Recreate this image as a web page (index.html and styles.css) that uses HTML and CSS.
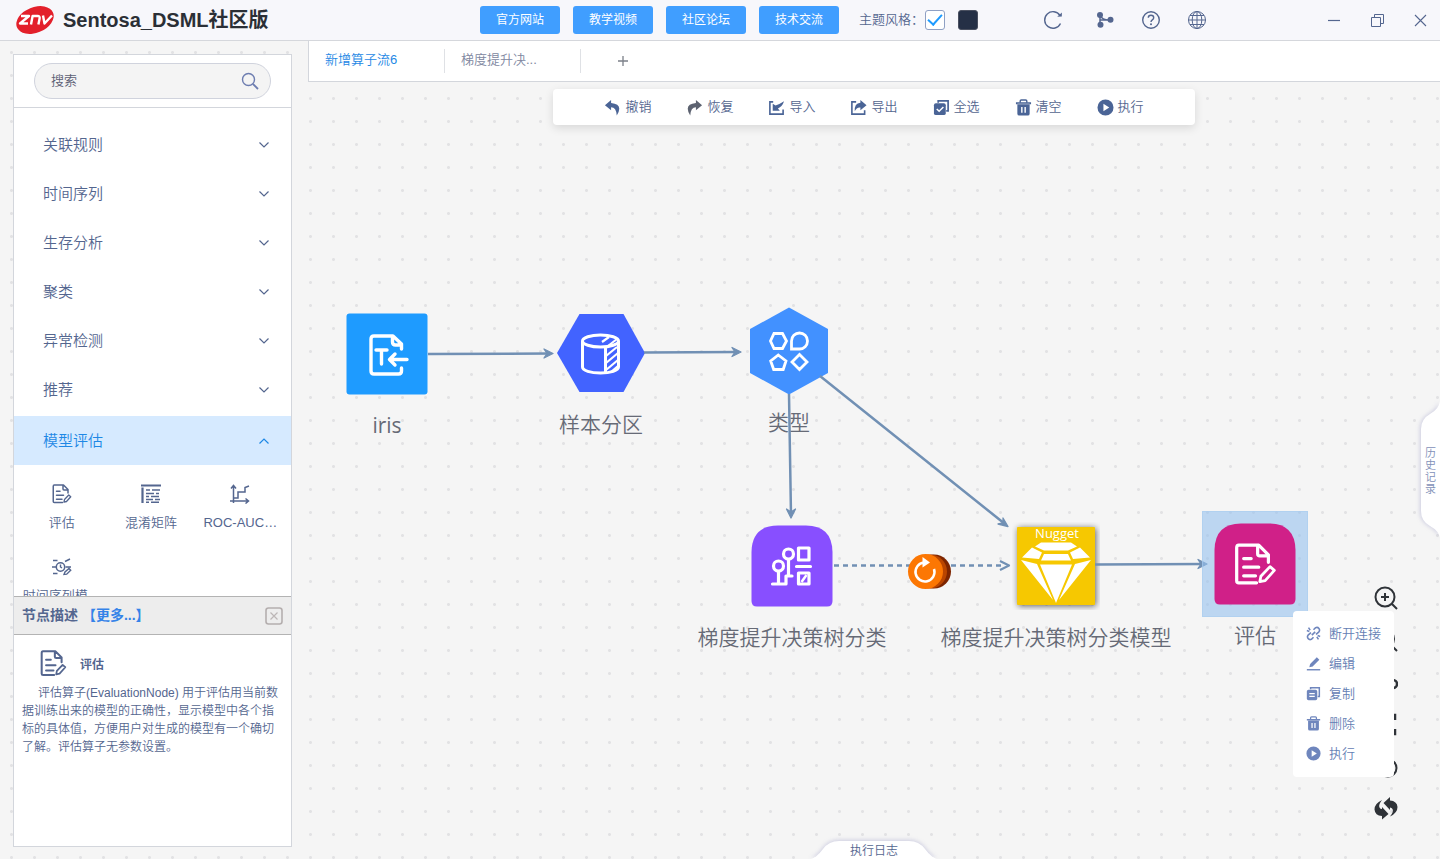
FILE: index.html
```html
<!DOCTYPE html>
<html lang="zh-CN">
<head>
<meta charset="utf-8">
<title>Sentosa_DSML社区版</title>
<link rel="stylesheet" href="styles.css">
</head>
<body>
<svg class="defs" width="0" height="0" aria-hidden="true">
  <symbol id="chevron" viewBox="0 0 12 12"><path d="M1.500 3.500L6 8l4.500-4.500" fill="none" stroke="currentColor" stroke-width="1.200"/></symbol>
  <symbol id="doc-edit" viewBox="0 0 40 40"><path d="M21 37H4.500Q2.500 37 2.500 35V4.500Q2.500 2 4.500 2H23l9 9v7M22 2.500V10q0 2 2 2h8M9 14.500h7M9 22.500h14M9 30.500h11" fill="none" stroke="currentColor" stroke-width="3" stroke-linecap="round" stroke-linejoin="round"/><path d="M24 36l1-5 8.500-9 4 3.500-8.500 9.500z" fill="none" stroke="currentColor" stroke-width="2.600" stroke-linejoin="round"/></symbol>
  <symbol id="trash" viewBox="0 0 18 18"><path d="M5.500 4V2.200Q5.500 1 6.700 1h4.600q1.200 0 1.200 1.200V4" fill="none" stroke="currentColor" stroke-width="1.500"/><path fill-rule="evenodd" d="M1 3.500h16v2H1zM2.500 5h13v10.500q0 2-2 2h-9q-2 0-2-2zM6.500 8.500v6h1.500v-6zM10 8.500v6h1.500v-6z" fill="currentColor"/></symbol>
  <symbol id="run" viewBox="0 0 18 18"><path fill-rule="evenodd" d="M9 .5a8.500 8.500 0 1 0 0 17a8.500 8.500 0 0 0 0-17zM6.800 5v8l6.200-4z" fill="currentColor"/></symbol>
</svg>

<header class="topbar">
  <div class="brand">
    <svg class="logo" viewBox="0 0 40 30" aria-label="znv"><ellipse cx="20" cy="15" rx="19.500" ry="12.800" transform="rotate(-22 20 15)" fill="#e3202b"/><g fill="none" stroke="#fff" stroke-width="2.400" stroke-linejoin="round"><path d="M6 11h8L5 18.500h8"/><path d="M16 19.500l1.600-8.500h5q2.500 0 2 2.500l-1.200 6"/><path d="M28 10.500l1.500 8L37 10.500"/></g></svg>
    <h1 class="title">Sentosa_DSML社区版</h1>
  </div>
  <nav class="links">
    <a class="link" href="#">官方网站</a>
    <a class="link" href="#">教学视频</a>
    <a class="link" href="#">社区论坛</a>
    <a class="link" href="#">技术交流</a>
  </nav>
  <div class="theme">
    <label for="theme-light">主题风格：</label>
    <input class="swatch" type="checkbox" id="theme-light" checked>
    <input class="swatch swatch-dark" type="checkbox" aria-label="深色主题">
  </div>
  <div class="tools">
    <button class="tool tool-refresh" aria-label="刷新"><svg viewBox="0 0 20 20"><path d="M17.500 13.500A8.300 8.300 0 1 1 17 5.500" fill="none" stroke="currentColor" stroke-width="1.400"/><path d="M14.200 6.800l4.600-.2.100-4.200z" fill="currentColor"/></svg></button>
    <button class="tool" aria-label="流程"><svg viewBox="0 0 20 20"><path d="M5 5v10M5 10h10M5 5q2 5 9 5" fill="none" stroke="currentColor" stroke-width="1.500"/><circle cx="5" cy="5" r="3" fill="currentColor"/><circle cx="5.500" cy="14.800" r="3" fill="currentColor"/><circle cx="15.500" cy="9.800" r="3" fill="currentColor"/></svg></button>
    <button class="tool" aria-label="帮助"><svg viewBox="0 0 20 20"><circle cx="10" cy="10" r="8.300" fill="none" stroke="currentColor" stroke-width="1.400"/><path d="M7.300 7.800Q7.300 5.300 10 5.300t2.700 2.400Q12.700 9 11.300 9.900 10 10.700 10 12" fill="none" stroke="currentColor" stroke-width="1.400"/><circle cx="10" cy="14.300" r="1" fill="currentColor"/></svg></button>
    <button class="tool" aria-label="语言"><svg viewBox="0 0 20 20"><g fill="none" stroke="currentColor" stroke-width="1"><circle cx="10" cy="10" r="8.500"/><ellipse cx="10" cy="10" rx="4.800" ry="8.500"/><path d="M10 1.500v17M1.500 10h17M3 5.500h14M3 14.500h14"/></g></svg></button>
  </div>
  <div class="window">
    <button class="tool" aria-label="最小化"><svg viewBox="0 0 20 20"><path d="M4 10.500h12" stroke="currentColor" stroke-width="1.200"/></svg></button>
    <button class="tool" aria-label="还原"><svg viewBox="0 0 20 20"><path d="M4.500 7.500h9v9h-9zM7.500 7V4.500h9v9H14" fill="none" stroke="currentColor" stroke-width="1"/></svg></button>
    <button class="tool" aria-label="关闭"><svg viewBox="0 0 20 20"><path d="M5 5l11 11M16 5L5 16" stroke="currentColor" stroke-width="1.100"/></svg></button>
  </div>
</header>

<div class="workspace">
  <aside class="sidebar">
    <div class="search">
      <div class="search-box">
        <input class="search-input" type="text" placeholder="搜索" aria-label="搜索">
        <svg class="search-icon" viewBox="0 0 18 18"><circle cx="7.500" cy="7.500" r="6" fill="none" stroke="currentColor" stroke-width="1.400"/><path d="M12 12l5 5" stroke="currentColor" stroke-width="1.800"/></svg>
      </div>
    </div>
    <div class="groups">
      <button class="group"><span>关联规则</span><svg class="chevron"><use href="#chevron"/></svg></button>
      <button class="group"><span>时间序列</span><svg class="chevron"><use href="#chevron"/></svg></button>
      <button class="group"><span>生存分析</span><svg class="chevron"><use href="#chevron"/></svg></button>
      <button class="group"><span>聚类</span><svg class="chevron"><use href="#chevron"/></svg></button>
      <button class="group"><span>异常检测</span><svg class="chevron"><use href="#chevron"/></svg></button>
      <button class="group"><span>推荐</span><svg class="chevron"><use href="#chevron"/></svg></button>
      <button class="group group-open"><span>模型评估</span><svg class="chevron"><use href="#chevron"/></svg></button>
      <div class="operators">
        <button class="operator"><svg><use href="#doc-edit"/></svg><span>评估</span></button>
        <button class="operator"><svg viewBox="0 0 20 20"><path d="M0 1.500h20M1.500 3.500V19" stroke="currentColor" stroke-width="2.200"/><path d="M5 6h4m2 0h8M5 9.500h8m2 0h3M5 12.500h3m2 0h8M5 15.500h7m2 0h5M5 18.300h3m2 0h8" stroke="currentColor" stroke-width="1.500"/></svg><span>混淆矩阵</span></button>
        <button class="operator"><svg viewBox="0 0 20 20"><path d="M3.500 19V2M0 17h18M1 4.500L3.500 1.500 6 4.500M15.500 14.500L18.500 17l-3 2.500M4 14h4V8h7V3.500l4-1.500" fill="none" stroke="currentColor" stroke-width="1.500"/></svg><span>ROC-AUC…</span></button>
        <button class="operator"><svg viewBox="0 0 20 20"><circle cx="8.500" cy="10" r="4.200" fill="none" stroke="currentColor" stroke-width="1.500"/><path d="M8.500 7.500V10l1.500 1M1 3.500h4.500M0 10h4M1 16.500h4.500M13 4.500l5-2.500M13.500 10H19M12 17.500l1-2.500 4-3.500 1.700 1.700-4 4z" fill="none" stroke="currentColor" stroke-width="1.400"/></svg><span>时间序列模…</span></button>
      </div>
    </div>
    <section class="details">
      <div class="details-head">
        <h2 class="details-title">节点描述 <a class="more" href="#">【更多...】</a></h2>
        <button class="details-close" aria-label="关闭描述"><svg viewBox="0 0 18 18"><rect x="1" y="1" width="16" height="16" rx="2.500" fill="none" stroke="#b4aeae" stroke-width="1.600"/><path d="M5.500 5.500l7 7M12.500 5.500l-7 7" stroke="#bcb6b6" stroke-width="1.200"/></svg></button>
      </div>
      <div class="details-body">
        <h3 class="details-name"><svg><use href="#doc-edit"/></svg>评估</h3>
        <p class="details-text">评估算子(EvaluationNode) 用于评估用当前数据训练出来的模型的正确性，显示模型中各个指标的具体值，方便用户对生成的模型有一个确切了解。评估算子无参数设置。</p>
      </div>
    </section>
  </aside>

  <main class="main">
    <div class="tabs">
      <button class="tab tab-active">新增算子流6</button>
      <button class="tab">梯度提升决...</button>
      <button class="tab-add" aria-label="新建"><svg viewBox="0 0 12 12"><path d="M6 1v10M1 6h10" stroke="currentColor" stroke-width="1.300"/></svg></button>
    </div>

    <div class="canvas">
      <div class="actions">
        <button class="action"><svg viewBox="0 0 18 18"><path d="M7.500 1L1 6.500l6.500 5.500V8.800q5.500 0 6 8.700Q21 5.500 7.500 4.300z" fill="currentColor"/></svg><span>撤销</span></button>
        <button class="action action-muted"><svg viewBox="0 0 18 18"><path d="M10.500 1L17 6.500l-6.500 5.500V8.800q-5.500 0-6 8.700Q-3 5.500 10.500 4.300z" fill="currentColor"/></svg><span>恢复</span></button>
        <button class="action"><svg viewBox="0 0 18 18"><path d="M5.500 3H2v13h14v-5" fill="none" stroke="currentColor" stroke-width="1.700"/><path d="M5 5v7.500h7.500L10.500 10Q15 8.500 17 2.500q-4.500 3-9 4.500z" fill="currentColor"/></svg><span>导入</span></button>
        <button class="action"><svg viewBox="0 0 18 18"><path d="M6.500 3H2v13h13.500v-4" fill="none" stroke="currentColor" stroke-width="1.700"/><path d="M11 1l6.500 5.500L11 12V9Q7 8.500 5 13 4.500 4.500 11 4z" fill="currentColor"/></svg><span>导出</span></button>
        <button class="action"><svg viewBox="0 0 18 18"><path d="M5.500 4V2h10.500v10.500H14" fill="none" stroke="currentColor" stroke-width="1.800"/><rect x="1" y="4.500" width="12.500" height="12.500" rx="2" fill="currentColor"/><path d="M4 10.500l2.500 2.500 4.500-4.500" fill="none" stroke="#fff" stroke-width="1.600"/></svg><span>全选</span></button>
        <button class="action"><svg><use href="#trash"/></svg><span>清空</span></button>
        <button class="action"><svg><use href="#run"/></svg><span>执行</span></button>
      </div>

      <div class="node node-iris">
        <svg viewBox="0 0 88 88"><rect x="3.500" y="3.500" width="81" height="81" rx="3" fill="#1e9bff"/><g fill="none" stroke="#fff" stroke-width="3.400" stroke-linejoin="round" stroke-linecap="round"><path d="M58.500 39V34L50 26H31q-3 0-3 3v32q0 3 3 3h24.500q3 0 3-3v-3M49.500 27v5q0 3 3 3h5"/><path d="M33 40h11M38.500 40v14M64 49.500H47M52 44l-5.500 5.500L52 55"/></g></svg>
        <span>iris</span>
      </div>
      <div class="node node-split">
        <svg viewBox="0 0 88 88"><path d="M22.500 5h44L88 44 66.500 83h-44L0 44z" fill="#4263ff"/><g fill="none" stroke="#fff" stroke-width="3"><ellipse cx="43.500" cy="32" rx="18" ry="6"/><path d="M25.500 32v26c0 3.500 8 6 18 6s18-2.500 18-6V32M48.500 38v25"/><path d="M49 47l11-9M49 54l12-10M49 61l12-10M54 63l7-6M45 33l7-5M51 37l9-7" stroke-width="2.200"/></g></svg>
        <span>样本分区</span>
      </div>
      <div class="node node-type">
        <svg viewBox="0 0 88 88"><path d="M44 .5L83 22v44L44 87.500 5 66V22z" fill="#4291ff"/><g fill="none" stroke="#fff" stroke-width="2.800"><path d="M29 26.500h8.500L41.500 34l-4 7.500H29L25.500 34zM46.500 42v-8a8 8 0 1 1 8 8zM33.300 48L41 54l-2.800 8.500h-9.500L25.700 54zM54.500 47.500l7.500 7.500-7.500 7.500-7.500-7.500z"/></g></svg>
        <span>类型</span>
      </div>
      <div class="node node-train">
        <svg viewBox="0 0 88 88"><path d="M3.500 30Q4 3.500 30 3.500h28Q84 3.500 84.500 30v49q0 5.500-5.500 5.500H9q-5.500 0-5.500-5.500z" fill="#884fff"/><g fill="none" stroke="#fff" stroke-width="3.200"><circle cx="40.500" cy="32" r="5"/><circle cx="30.500" cy="44" r="5"/><path d="M40.500 38v16M30.500 50v11.500M24.500 62H38V54h6M50.500 26h10.500v12H50.500zM48.500 44.500h14M50.500 51h10.500v11H50.500z" stroke-linecap="round" stroke-linejoin="round"/><path d="M53.500 60l5-7" stroke-width="2.500"/></g></svg>
        <span>梯度提升决策树分类</span>
      </div>
      <div class="node node-model">
        <svg viewBox="0 0 88 88"><rect class="nugget" x="5" y="5" width="78" height="78" rx="1"/><text class="nugget-text" x="45" y="16" text-anchor="middle">Nugget</text><path fill="#fff" d="M29 20.500h30l6 4-9 4H32l-9-4zM20 25.500l10 5-3 6.500-17-1.500zM68 25.500l-10 5 3 6.500 17-1.500zM32 32h24l3 6.500H29zM9 38l16 4 16 36zM79 38l-16 4-16 36zM28 42.500h32L44 81z"/></svg>
        <span>梯度提升决策树分类模型</span>
      </div>
      <div class="node node-eval">
        <svg viewBox="0 0 88 88"><path d="M3.500 30Q4 3.500 30 3.500h28Q84 3.500 84.500 30v49q0 5.500-5.500 5.500H9q-5.500 0-5.500-5.500z" fill="#d02088"/><svg x="23" y="23" width="43" height="43" color="#fff"><use href="#doc-edit"/></svg></svg>
        <span>评估</span>
      </div>

      <svg class="edges" aria-hidden="true">
        <g fill="none" stroke="#7190b4" stroke-width="2.500">
          <path d="M120 272L242 271.500M336 270.500L430 270M481 312L483 433M512 294L697 442M787 482.500L897 482"/>
          <path d="M526 483.500H696" stroke-dasharray="5 4"/>
        </g>
        <g fill="#7190b4" stroke="#7190b4" stroke-width="1.300" stroke-linejoin="round">
          <path d="M236 267l9 4.500-9 4.500 3-4.500zM424 265.500l9 4.500-9 4.500 3-4.500zM478.500 427l4.500 9 4.500-9-4.500 3zM695 436l5 8.500-10-2.500 5-1zM890 477.500l9 4.500-9 4.500 3-4.500z"/>
          <path d="M692 479l9 4.500-9 4.500" fill="none" stroke-width="2.200"/>
        </g>
        <g>
          <circle cx="626" cy="489.500" r="17" fill="#7d2500"/>
          <circle cx="622" cy="489.500" r="17" fill="#b94500"/>
          <circle cx="617.500" cy="489.500" r="17.500" fill="#fc7703"/>
          <path d="M626 487a9.500 9.500 0 1 1-10-6.500" fill="none" stroke="#fff" stroke-width="2.500"/>
          <path d="M614.500 475l7.500 5.500-7.500 5z" fill="#fff"/>
        </g>
      </svg>
      <div class="selection"></div>

      <div class="zoom">
        <button class="zoom-btn" aria-label="放大"><svg viewBox="0 0 24 24"><circle cx="11" cy="11" r="9.500"/><path d="M18 18l5 5M11 7v8M7 11h8"/></svg></button>
        <button class="zoom-btn" aria-label="缩小"><svg viewBox="0 0 24 24"><circle cx="10.500" cy="11" r="9.500"/><path d="M18 18l5 5M7 11h8"/></svg></button>
        <button class="zoom-btn" aria-label="定位"><svg viewBox="0 0 24 24"><circle cx="19" cy="14" r="4" stroke-width="2.500"/><path d="M1 14h14"/></svg></button>
        <button class="zoom-btn" aria-label="适应画布"><svg viewBox="0 0 24 24"><path d="M2 8V3h5M17 3h4v5M21 17v5h-4M7 22H2v-5" stroke-width="2.500"/></svg></button>
        <button class="zoom-btn" aria-label="还原"><svg viewBox="0 0 24 24"><circle cx="14" cy="14" r="8.500"/></svg></button>
        <button class="zoom-btn" aria-label="同步"><svg viewBox="0 0 24 24"><path class="solid" d="M9.500 7L16 1v3.500q7 .5 7.500 6.500 0 6-7.500 9.500 4-5 2.500-7.500-.800-1.500-2.500-1.500V14zM14.500 18L8 23.500V20Q1 19.500.5 13.500.5 7.500 8 4 4 9 5.500 11.500q.8 1.500 2.500 1.500v-2z"/></svg></button>
      </div>

      <div class="menu">
        <button class="menu-item"><svg viewBox="0 0 18 18"><path d="M9 4.500l2.500-2.500q2.500-1 4 1t0 4L12 10M9 13.500L6.500 16q-2.500 1-4-1t0-4L6 8M7 11l4-4M3 2l2 3M1 5.500l3 1M15 16l-2-3M17 12.500l-3-1" fill="none" stroke="currentColor" stroke-width="1.900"/></svg><span>断开连接</span></button>
        <button class="menu-item"><svg viewBox="0 0 18 18"><path d="M4 13.500l1-4L13 1.500l3 3-8 8z" fill="currentColor"/><path d="M1 16.500h16" stroke="currentColor" stroke-width="1.700"/></svg><span>编辑</span></button>
        <button class="menu-item"><svg viewBox="0 0 18 18"><path d="M5.500 4V2h10.500v10.500H14" fill="none" stroke="currentColor" stroke-width="1.800"/><rect x="1" y="4.500" width="12.500" height="12.500" rx="2" fill="currentColor"/><path d="M4 9h6.500M4 12.500h6.500" stroke="#fff" stroke-width="1.500"/></svg><span>复制</span></button>
        <button class="menu-item"><svg><use href="#trash"/></svg><span>删除</span></button>
        <button class="menu-item"><svg><use href="#run"/></svg><span>执行</span></button>
      </div>

      <button class="history"><svg viewBox="0 0 20 140" aria-hidden="true"><path d="M20 1Q19 9 10 14 1 19 1 29V111Q1 121 10 126 19 131 20 138z" fill="#fff"/></svg><span>历史记录</span></button>
      <button class="log"><svg viewBox="0 0 126 18" aria-hidden="true"><path d="M0 18Q6 16 12 8 18 0 28 0H98Q108 0 114 8 120 16 126 18z" fill="#fff"/></svg><span>执行日志</span></button>
    </div>
  </main>
</div>
</body>
</html>
```
FILE: styles.css
```css
* { box-sizing: border-box; }

body {
  margin: 0;
  min-height: 100vh;
  display: flex;
  flex-direction: column;
  overflow: hidden;
  font-family: "Liberation Sans", "Noto Sans CJK SC", sans-serif;
  font-size: 13px;
  font-weight: 350;
  color: #54668f;
  background-color: #f5f5f5;
  background-image: radial-gradient(circle, #e2e2e4 1px, transparent 2px);
  background-size: 23px 23px;
  background-position: 0 18px;
}

button {
  margin: 0;
  padding: 0;
  border: 0;
  background: none;
  font: inherit;
  color: inherit;
  cursor: pointer;
}

h1, h2, h3, p { margin: 0; }
a { text-decoration: none; }
svg { display: block; flex: none; }
.defs { position: absolute; }

/* top bar */
.topbar {
  display: flex;
  align-items: center;
  height: 41px;
  padding-right: 10px;
  background: #f7f7fb;
  border-bottom: 1px solid #d5d7dc;
}
.brand {
  display: flex;
  align-items: center;
  gap: 8px;
  width: 479px;
  padding-left: 15px;
}
.logo { width: 40px; height: 30px; }
.title {
  font-size: 20px;
  font-weight: 700;
  line-height: 28px;
  color: #2b2f36;
}
.links { display: flex; gap: 13px; margin-left: 1px; }
.link {
  width: 80px;
  height: 28px;
  line-height: 28px;
  border-radius: 3px;
  background: #409eff;
  color: #fff;
  font-size: 12px;
  font-weight: 400;
  text-align: center;
}
.theme {
  display: flex;
  align-items: center;
  margin-left: 20px;
}
.theme label { width: 66px; padding-bottom: 3px; white-space: nowrap; }
.swatch {
  appearance: none;
  display: grid;
  place-items: center;
  width: 20px;
  height: 20px;
  margin: 0;
  border: 1px solid #8fa0c4;
  border-radius: 3px;
  background: #fff;
}
.swatch:checked::after {
  content: "";
  width: 6px;
  height: 12px;
  margin-bottom: 4px;
  border: solid #1e9bff;
  border-width: 0 2px 2px 0;
  transform: rotate(42deg);
}
.swatch-dark {
  margin-left: 13px;
  border-color: #4a5060;
  background: #253046;
}
.tools { display: flex; gap: 26px; margin-left: 65px; }
.tool-refresh { margin-right: 6px; }
.tool svg { width: 20px; height: 20px; }
.window { display: flex; gap: 23px; margin-left: auto; }

/* layout */
.workspace { flex: 1; display: flex; min-height: 0; }

/* sidebar */
.sidebar {
  display: flex;
  flex-direction: column;
  width: 279px;
  height: calc(100vh - 66px);
  margin: 13px 16px 12px 13px;
  background: #fff;
  border: 1px solid #d3d6dc;
}
.search { padding: 8px 20px; border-bottom: 1px solid #d3d6dc; }
.search-box {
  display: flex;
  align-items: center;
  height: 36px;
  padding: 0 11px 0 16px;
  border: 1px solid #d0d3dd;
  border-radius: 18px;
  background: #f4f4f4;
}
.search-input {
  flex: 1;
  min-width: 0;
  padding: 0 0 2px;
  border: 0;
  outline: 0;
  background: none;
  font: inherit;
}
.search-input::placeholder { color: #5d6075; }
.search-icon { width: 18px; height: 18px; color: #6d7db0; }

.groups { flex: 1; min-height: 0; padding-top: 14px; overflow: hidden; }
.group {
  display: flex;
  align-items: center;
  justify-content: space-between;
  width: 100%;
  height: 49px;
  padding: 0 21px 3px 29px;
  font-size: 15px;
}
.group span { padding-bottom: 3px; }
.chevron { width: 12px; height: 12px; }
.group-open { padding-bottom: 0; background: #d6eaff; color: #1e88e5; }
.group-open .chevron { transform: rotate(180deg); }

.operators {
  display: grid;
  grid-template-columns: repeat(3, 1fr);
  padding: 19px 6px 0 3px;
}
.operator {
  display: flex;
  flex-direction: column;
  align-items: center;
  gap: 9px;
  height: 73px;
  min-width: 0;
}
.operator svg { width: 20px; height: 20px; }
.operator span { white-space: nowrap; line-height: 20px; }

.details { flex: none; height: 250px; border-top: 1px solid #b3b3b3; }
.details-head {
  display: flex;
  align-items: center;
  justify-content: space-between;
  height: 38px;
  padding: 0 8px;
  background: #ededed;
  border-bottom: 1px solid #b3b3b3;
}
.details-title { padding-bottom: 3px; font-size: 14px; font-weight: 700; }
.more { color: #3583e8; }
.details-close svg { width: 18px; height: 18px; }
.details-body { padding: 15px 8px; }
.details-name {
  display: flex;
  align-items: center;
  gap: 13px;
  padding-left: 18px;
  font-size: 12px;
  font-weight: 700;
}
.details-name svg { width: 27px; height: 27px; }
.details-text {
  margin-top: 7px;
  font-size: 12px;
  line-height: 18px;
  text-indent: 16px;
}

/* tabs */
.main { flex: 1; min-width: 0; display: flex; flex-direction: column; }
.tabs {
  display: flex;
  align-items: center;
  height: 41px;
  background: #fff;
  border-left: 1px solid #d3d6dc;
  border-bottom: 1px solid #d3d6dc;
}
.tab {
  width: 136px;
  height: 24px;
  padding: 0 16px 2px;
  border-right: 1px solid #dfe1e5;
  color: #8087a0;
  text-align: left;
  line-height: 20px;
}
.tab-active { color: #1e88e5; }
.tab-add { margin-left: 36px; color: #7c8089; }
.tab-add svg { width: 12px; height: 12px; }

/* canvas */
.canvas { position: relative; flex: 1; overflow: hidden; }
.actions {
  display: flex;
  gap: 35px;
  width: max-content;
  height: 36px;
  margin: 7px auto 0;
  padding: 0 51px;
  background: #fff;
  border-radius: 4px;
  box-shadow: 0 3px 10px rgba(0, 0, 0, 0.12);
}
.action { display: flex; align-items: center; gap: 4px; }
.action span { padding-bottom: 3px; }
.action svg { width: 17px; height: 17px; color: #4a6496; }
.action-muted svg { color: #5c6270; }

.node {
  position: absolute;
  display: flex;
  flex-direction: column;
  align-items: center;
  gap: 12px;
  width: 240px;
  font-family: "Open Sans", "Noto Sans CJK SC", sans-serif;
  font-size: 21px;
  line-height: 30px;
  color: #666a76;
}
.node svg { width: 88px; height: 88px; }
.node svg svg { width: 43px; height: 43px; }
.node-iris { left: -41px; top: 228px; font-weight: 400; }
.node-split { left: 173px; top: 227px; }
.node-type { left: 361px; top: 225px; }
.node-train { left: 364px; top: 440px; }
.node-model { left: 628px; top: 440px; }
.node-eval { left: 827px; top: 438px; z-index: 2; }
.nugget { fill: #f6c801; filter: drop-shadow(1px 1px 3px rgba(0, 0, 0, 0.6)); }
.nugget-text { font: 500 13px "Open Sans", sans-serif; fill: #fff; }
.edges { position: absolute; inset: 0; width: 100%; height: 100%; }
.selection {
  position: absolute;
  left: 894px;
  top: 429px;
  width: 106px;
  height: 106px;
  background: rgba(150, 194, 238, 0.6);
  border: 1px solid rgba(170, 205, 240, 0.6);
}

.zoom {
  position: absolute;
  right: 42px;
  top: 504px;
  z-index: 2;
  display: flex;
  flex-direction: column;
  gap: 18px;
  color: #2f3338;
}
.zoom-btn svg {
  width: 24px;
  height: 24px;
  fill: none;
  stroke: currentColor;
  stroke-width: 2;
}
.zoom-btn .solid { fill: currentColor; stroke: none; }

.menu {
  position: absolute;
  left: 985px;
  top: 529px;
  z-index: 3;
  width: 101px;
  padding: 7px 0 9px 13px;
  background: #fff;
  border-radius: 4px;
}
.menu-item {
  display: flex;
  align-items: center;
  gap: 8px;
  height: 30px;
  color: #6480b4;
}
.menu-item span { padding-bottom: 2px; white-space: nowrap; }
.menu-item svg { width: 15px; height: 15px; color: #6f86bd; }

.history {
  position: absolute;
  right: 0;
  top: 318px;
  display: grid;
  place-items: center;
}
.history > *, .log > * { grid-area: 1 / 1; }
.history svg { width: 20px; height: 140px; filter: drop-shadow(-1px 0 2px rgba(80, 80, 160, 0.25)); }
.history span { width: 12px; padding: 2px 0 0 1px; font-size: 11px; line-height: 12px; color: #7f90b8; z-index: 1; }
.log {
  position: absolute;
  left: 0;
  right: 0;
  bottom: 0;
  width: 126px;
  margin: 0 auto;
  display: grid;
  place-items: center;
}
.log svg { width: 126px; height: 18px; filter: drop-shadow(0 -1px 2px rgba(80, 80, 160, 0.25)); }
.log span { padding-top: 2px; font-size: 12px; line-height: 16px; z-index: 1; }
```
